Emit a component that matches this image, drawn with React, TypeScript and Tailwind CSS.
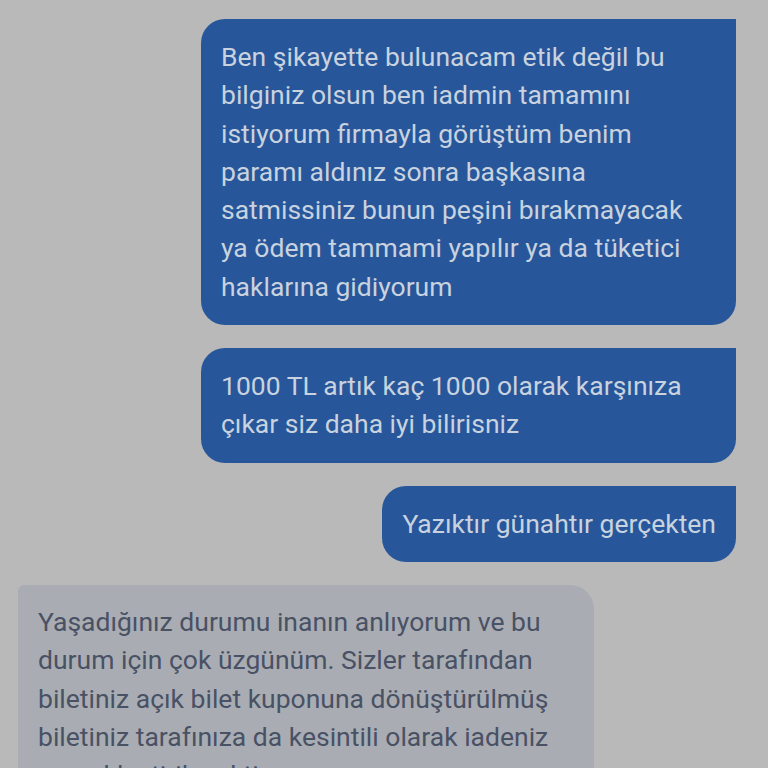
import React from 'react';

const Outgoing: React.FC<{ text: string; fixed?: boolean }> = ({ text, fixed }) => (
    <div className="flex justify-end">
        <div
            className={`${fixed ? 'w-[535px] pr-[30px]' : 'pr-5'} bg-[#27579a] text-[#c9d2df] rounded-[24px] rounded-tr-none pl-5 py-[19px]`}
        >
            {text}
        </div>
    </div>
);

export default function App() {
    return (
        <div
            className="w-[768px] h-[768px] overflow-hidden bg-[#b9b9b9] text-[26.5px] leading-[38.3px] pt-[19px] pr-8 pl-[18px] flex flex-col gap-[23px]"
            style={{ fontFamily: 'Roboto, "Noto Sans", sans-serif' }}
        >
            <Outgoing
                fixed
                text="Ben şikayette bulunacam etik değil bu bilginiz olsun ben iadmin tamamını istiyorum firmayla görüştüm benim paramı aldınız sonra başkasına satmissiniz bunun peşini bırakmayacak ya ödem tammami yapılır ya da tüketici haklarına gidiyorum"
            />
            <Outgoing fixed text="1000 TL artık kaç 1000 olarak karşınıza çıkar siz daha iyi bilirisniz" />
            <Outgoing text="Yazıktır günahtır gerçekten" />
            <div className="flex justify-start">
                <div className="w-[576px] bg-[#a9adb3] text-[#495165] rounded-[24px] rounded-tl-md px-5 pt-[18px] pb-[19px]">
                    Yaşadığınız durumu inanın anlıyorum ve bu durum için çok üzgünüm. Sizler tarafından biletiniz açık bilet kuponuna dönüştürülmüş biletiniz tarafınıza da kesintili olarak iadeniz gerçekleştirilecektir.
                </div>
            </div>
        </div>
    );
}
